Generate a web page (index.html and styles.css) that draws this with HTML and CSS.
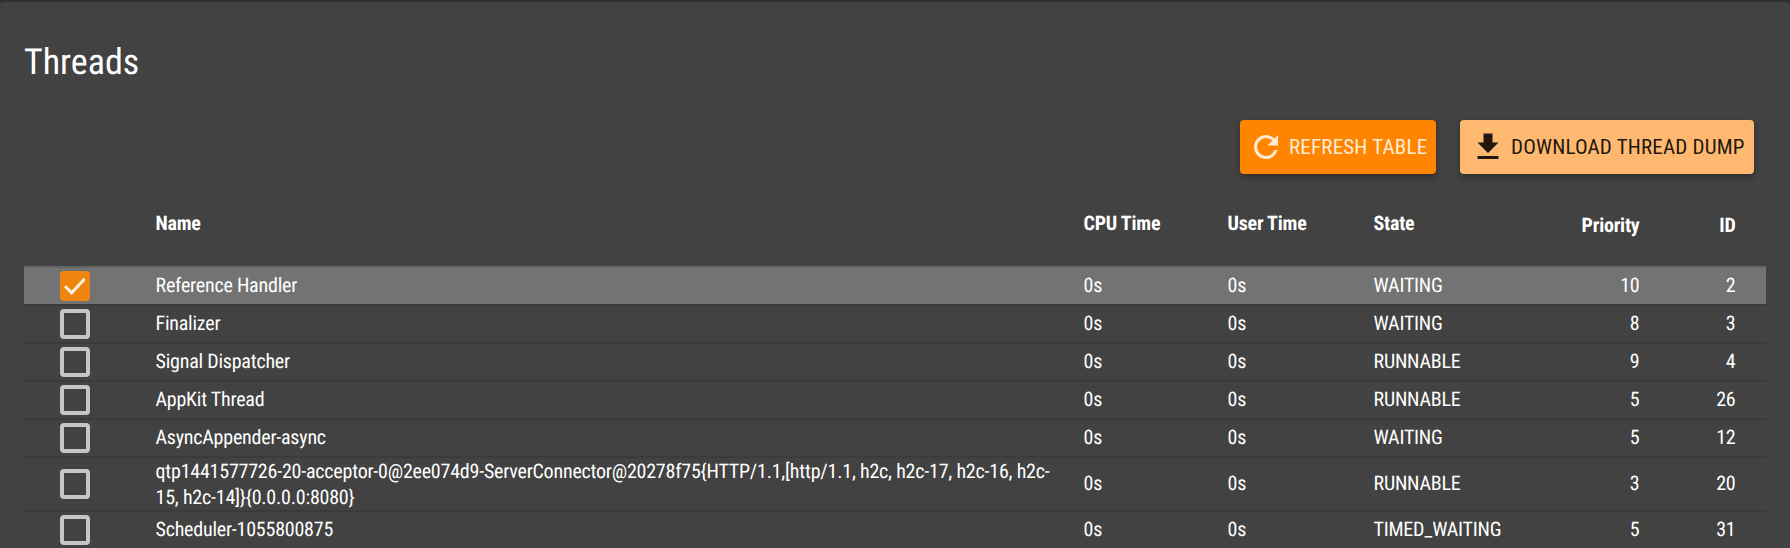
FILE: index.html
```html
<!DOCTYPE html>
<html lang="en">
<head>
<meta charset="utf-8">
<title>Threads</title>
<link rel="stylesheet" href="styles.css">
</head>
<body>
<main class="card">
  <h1 class="title">Threads</h1>
  <div class="actions">
    <button class="btn btn-primary"><svg class="icon" viewBox="0 0 24 24"><path d="M17.65 6.35A7.958 7.958 0 0 0 12 4a8 8 0 1 0 7.73 10h-2.08A5.99 5.99 0 0 1 12 18a6 6 0 1 1 0-12c1.66 0 3.14.69 4.22 1.78L13 11h7V4l-2.35 2.35z"/></svg><span>REFRESH TABLE</span></button>
    <button class="btn btn-accent"><svg class="icon" viewBox="0 0 24 24"><path d="M19 9h-4V3H9v6H5l7 7 7-7zM5 18v2h14v-2H5z"/></svg><span>DOWNLOAD THREAD DUMP</span></button>
  </div>
  <div class="table">
    <div class="row head"><span></span><span>Name</span><span>CPU Time</span><span>User Time</span><span>State</span><span class="num">Priority</span><span class="num">ID</span></div>
    <div class="row selected"><span class="check checked"><svg viewBox="0 0 30 30"><path d="M5 15.2l6.7 6.6L24.5 8"/></svg></span><span>Reference Handler</span><span>0s</span><span>0s</span><span>WAITING</span><span class="num">10</span><span class="num">2</span></div>
    <div class="row"><span class="check"></span><span>Finalizer</span><span>0s</span><span>0s</span><span>WAITING</span><span class="num">8</span><span class="num">3</span></div>
    <div class="row"><span class="check"></span><span>Signal Dispatcher</span><span>0s</span><span>0s</span><span>RUNNABLE</span><span class="num">9</span><span class="num">4</span></div>
    <div class="row"><span class="check"></span><span>AppKit Thread</span><span>0s</span><span>0s</span><span>RUNNABLE</span><span class="num">5</span><span class="num">26</span></div>
    <div class="row"><span class="check"></span><span>AsyncAppender-async</span><span>0s</span><span>0s</span><span>WAITING</span><span class="num">5</span><span class="num">12</span></div>
    <div class="row"><span class="check"></span><span class="multiline">qtp1441577726-20-acceptor-0@2ee074d9-ServerConnector@20278f75{HTTP/1.1,[http/1.1, h2c, h2c-17, h2c-16, h2c-<br>15, h2c-14]}{0.0.0.0:8080}</span><span>0s</span><span>0s</span><span>RUNNABLE</span><span class="num">3</span><span class="num">20</span></div>
    <div class="row"><span class="check"></span><span>Scheduler-1055800875</span><span>0s</span><span>0s</span><span>TIMED_WAITING</span><span class="num">5</span><span class="num">31</span></div>
  </div>
</main>
</body>
</html>
```
FILE: styles.css
```css
* { box-sizing: border-box; }
body {
  margin: 0;
  padding-top: 2px;
  height: 548px;
  overflow: hidden;
  background: #303030;
  color: #fff;
  font-family: "Roboto Condensed", Roboto, sans-serif;
  font-stretch: 75%;
  font-size: 20px;
  line-height: 26px;
  text-rendering: geometricPrecision;
}
.card {
  height: 546px;
  padding: 36px 24px 0;
  border-radius: 4px 4px 0 0;
  background: #424242;
}
.title {
  margin: 0;
  height: 48px;
  font-size: 36px;
  font-weight: 400;
  line-height: 48px;
}
.actions {
  display: flex;
  justify-content: flex-end;
  gap: 24px;
  padding: 34px 12px 0 0;
}
.btn {
  display: flex;
  align-items: center;
  height: 54px;
  border: 0;
  border-radius: 4px;
  font: inherit;
  font-size: 21px;
  letter-spacing: .2px;
  white-space: nowrap;
  box-shadow: 0 3px 6px rgba(0, 0, 0, .3);
}
.btn-primary { width: 196px; padding: 0 0 0 8px; gap: 5px; background: #ff8500; color: #ffebd5; }
.btn-accent { width: 294px; padding: 0 0 0 10px; gap: 5px; background: #ffb870; color: #21180f; }
.icon { flex: none; width: 36px; height: 36px; fill: currentColor; }
.table { letter-spacing: -.22px; }
.row {
  display: grid;
  grid-template-columns: 95.5px 928px 144px 146px 150.5px 115.5px 96px;
  align-items: center;
  min-height: 38px;
  padding-left: 36px;
  border-top: 2px solid #3b3b3b;
  white-space: nowrap;
}
.row > span:not(.check) { padding-bottom: 2px; }
.row > .multiline:not(.check) { padding-bottom: 0; }
.head { height: 92px; padding-top: 8px; border: 0; font-weight: 700; }
.head > .num:not(.check) { padding: 2px 0 0; }
.selected { background: #737373; border-color: #666; }
.num { text-align: right; }
.check { width: 30px; height: 30px; border: 4px solid #c6c6c6; border-radius: 4px; }
.checked { border: 0; background: #ee850f; }
.check svg { display: block; width: 30px; height: 30px; fill: none; stroke: #fff0df; stroke-width: 3; }
```
